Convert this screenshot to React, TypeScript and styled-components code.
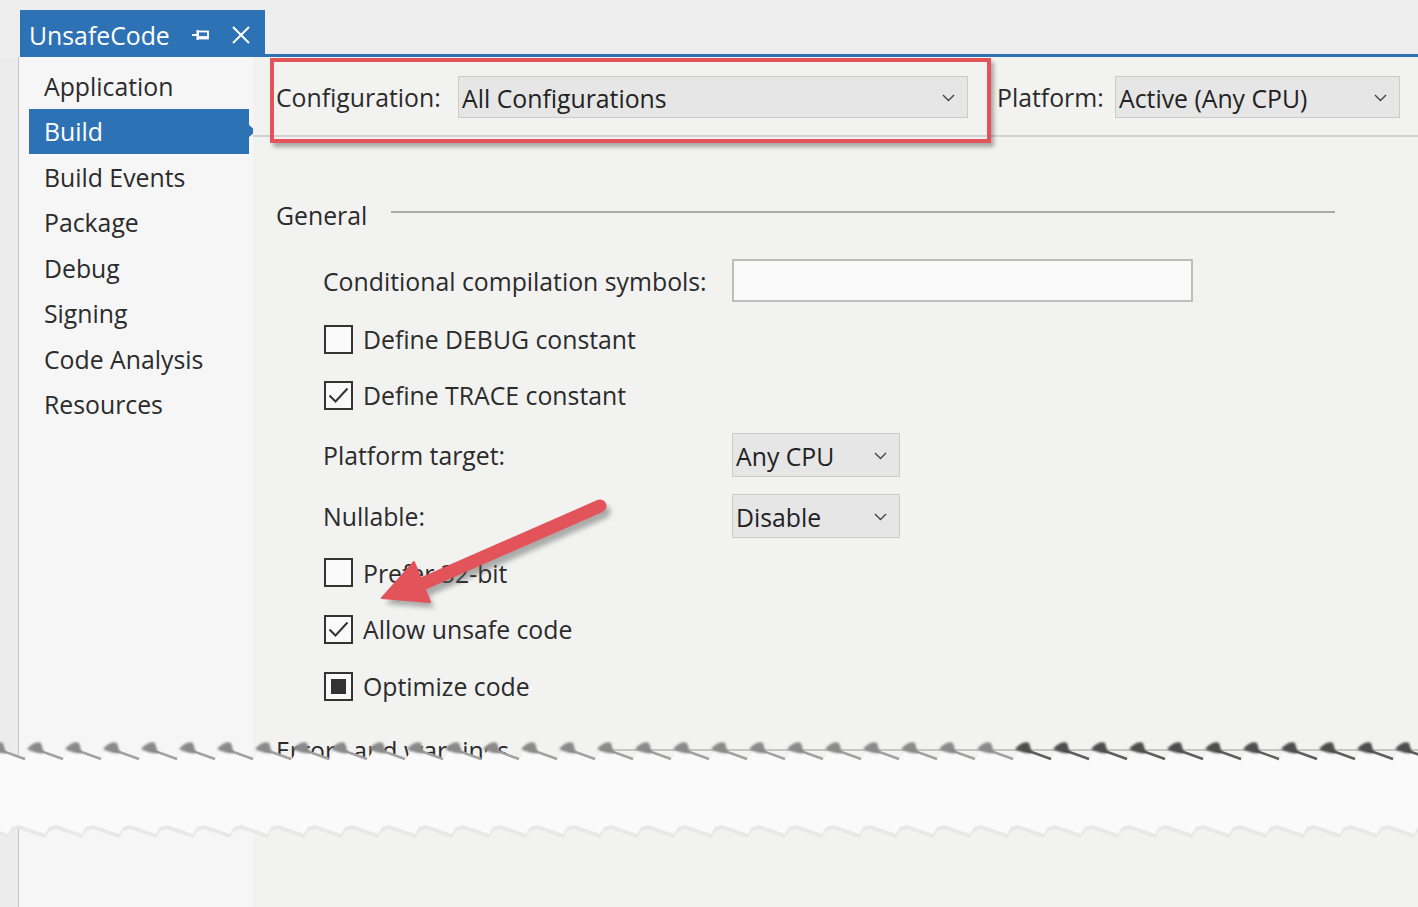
import React from "react";
import styled, { createGlobalStyle } from "styled-components";

const Global = createGlobalStyle`
  html, body { margin: 0; padding: 0; background: #eeeeee; }
  * { box-sizing: border-box; }
`;

const BLUE = "#2e72b6";
const RED = "#e2535a";
const FONT = `"Open Sans", "Noto Sans", "Liberation Sans", sans-serif`;

const Page = styled.div`
  position: relative;
  width: 1418px;
  height: 907px;
  overflow: hidden;
  display: flex;
  flex-direction: column;
  background: #eeeeee;
  font-family: ${FONT};
  font-size: 24.8px;
  color: #2b2b2b;
`;

const TabStrip = styled.div`
  height: 57px;
  margin-left: 20px;
  display: flex;
  align-items: flex-end;
  border-bottom: 3px solid ${BLUE};
`;

const Tab = styled.div`
  height: 47px;
  width: 245px;
  margin-bottom: -3px;
  background: ${BLUE};
  color: #ffffff;
  display: flex;
  align-items: center;
  padding-left: 9px;
  padding-top: 3px;
`;

const TabTitle = styled.span`
  flex: 1;
  line-height: 1;
`;

const TabIcon = styled.svg<{ $mr?: number }>`
  display: block;
  margin-right: ${(p) => p.$mr ?? 0}px;
`;

const Body = styled.div`
  flex: 1;
  display: flex;
  min-height: 0;
`;

const Gutter = styled.div`
  width: 19px;
  border-right: 1px solid #c6c6c6;
  background: #ececec;
`;

const Sidebar = styled.nav`
  width: 234px;
  background: #f6f6f6;
  padding-top: 6px;
  display: flex;
  flex-direction: column;
`;

const NavItem = styled.div<{ $active?: boolean }>`
  position: relative;
  height: 45.5px;
  width: 220px;
  margin-left: 10px;
  padding-left: 15px;
  display: flex;
  align-items: center;
  background: ${(p) => (p.$active ? BLUE : "transparent")};
  color: ${(p) => (p.$active ? "#ffffff" : "#2b2b2b")};
  ${(p) =>
    p.$active &&
    `&::after {
      content: "";
      position: absolute;
      right: -7px;
      top: 50%;
      margin-top: -6px;
      border-left: 7px solid ${BLUE};
      border-top: 6px solid transparent;
      border-bottom: 6px solid transparent;
    }`}
`;

const Main = styled.main`
  position: relative;
  flex: 1;
  background: #f2f2f1;
  display: flex;
  flex-direction: column;
`;

const HeaderBar = styled.div`
  position: relative;
  display: flex;
  align-items: center;
  padding: 19px 0 17px 23px;
  border-bottom: 2px solid #d2d2d2;
`;

const FieldLabel = styled.span<{ $w: number }>`
  width: ${(p) => p.$w}px;
  flex: none;
  white-space: nowrap;
`;

const Select = styled.div<{ $w: number; $h?: number; $mr?: number }>`
  width: ${(p) => p.$w}px;
  height: ${(p) => p.$h ?? 42}px;
  margin-right: ${(p) => p.$mr ?? 0}px;
  flex: none;
  display: flex;
  align-items: center;
  justify-content: space-between;
  padding: 2px 12px 0 3px;
  background: #e6e6e6;
  border: 1px solid #cbcbcb;
  color: #222;
  white-space: nowrap;
`;

const Highlight = styled.div`
  position: absolute;
  left: 17px;
  top: 1px;
  width: 721px;
  height: 85px;
  border: 4px solid ${RED};
  box-shadow: 3px 4px 4px rgba(0, 0, 0, 0.3);
  pointer-events: none;
`;

const Section = styled.div<{ $mt: number; $h?: number }>`
  display: flex;
  align-items: center;
  margin-top: ${(p) => p.$mt}px;
  height: ${(p) => p.$h ?? 32}px;
  padding-left: 23px;
  margin-right: 83px;
`;

const SectionRule = styled.div`
  flex: 1;
  height: 2px;
  margin-left: 24px;
  margin-top: -6px;
  background: #a9a9a9;
`;

const Row = styled.div<{ $h: number; $mt?: number }>`
  display: flex;
  align-items: center;
  height: ${(p) => p.$h}px;
  margin-top: ${(p) => p.$mt ?? 0}px;
  padding-left: 70px;
`;

const RowLabel = styled.span`
  width: 409px;
  flex: none;
  white-space: nowrap;
`;

const TextBox = styled.div`
  width: 461px;
  height: 43px;
  background: #fafafa;
  border: 2px solid #bdbdbd;
`;

const CheckLine = styled.label`
  display: flex;
  align-items: center;
  gap: 10px;
  white-space: nowrap;
`;

const Box = styled.span`
  width: 29px;
  height: 29px;
  margin-left: 1px;
  border: 2px solid #333;
  background: #fafafa;
  display: flex;
  align-items: center;
  justify-content: center;
`;

const Fill = styled.span`
  width: 15px;
  height: 15px;
  background: #333;
`;

const Overlay = styled.svg<{ $l: number; $t: number }>`
  position: absolute;
  left: ${(p) => p.$l}px;
  top: ${(p) => p.$t}px;
  pointer-events: none;
`;

const Chevron = () => (
  <svg width="13" height="8" viewBox="0 0 13 8">
    <path d="M1 1 L6.5 6.5 L12 1" fill="none" stroke="#444" strokeWidth="1.4" />
  </svg>
);

type CheckState = "off" | "on" | "mixed";

const Check = ({ state, children }: { state: CheckState; children: React.ReactNode }) => (
  <CheckLine>
    <Box>
      {state === "on" && (
        <svg width="25" height="25" viewBox="0 0 25 25">
          <path d="M3.5 12.5 L9.5 18.5 L21.5 5.5" fill="none" stroke="#333" strokeWidth="2" />
        </svg>
      )}
      {state === "mixed" && <Fill />}
    </Box>
    {children}
  </CheckLine>
);

const navItems = [
  "Application",
  "Build",
  "Build Events",
  "Package",
  "Debug",
  "Signing",
  "Code Analysis",
  "Resources",
];

function tearPaths() {
  const step = 38;
  let top = "M0 24";
  const blobs: string[] = [];
  const shadows: string[] = [];
  for (let x = -5; x < 1430; x += step) {
    top += ` L${x} 13 L${x + 30} 25`;
    blobs.push(
      `M${x - 6} 14 Q${x + 2} 5 ${x + 8} 8 L${x + 11} 18 Q${x + 2} 19 ${x - 6} 14 Z`
    );
    shadows.push(`M${x + 4} 20 L${x + 32} 30`);
  }
  top += " L1418 25";
  let bottom = " L1418 92";
  const bstep = 37;
  for (let x = 1418; x > -40; x -= bstep) {
    bottom += ` L${x - 4} 99 L${x - 30} 90 L${x - 37} 92`;
  }
  bottom += " L0 92 Z";
  return { body: top + bottom, blobs, shadows };
}

const Tear = () => {
  const { body, blobs, shadows } = tearPaths();
  return (
    <Overlay $l={0} $t={735} width="1418" height="110" viewBox="0 0 1418 110">
      <defs>
        <filter id="soft" x="-10%" y="-50%" width="120%" height="200%">
          <feGaussianBlur stdDeviation="0.8" />
        </filter>
      </defs>
      <path d={body} fill="#e8e8e8" transform="translate(0 4)" />
      {shadows.map((d, i) => (
        <path key={"s" + i} d={d} stroke="#c8c8c8" strokeWidth="4" fill="none" filter="url(#soft)" />
      ))}
      <path d={body} fill="#fafafa" />
      <path d="M600 15 L1418 15" stroke="#9a9a9a" strokeWidth="1" />
      {shadows.map((d, i) => (
        <path
          key={"e" + i}
          d={d}
          transform="translate(-2 -6)"
          stroke={i > 26 ? "#5e5e5e" : "#a2a2a2"}
          strokeWidth="2.5"
          fill="none"
        />
      ))}
      {blobs.map((d, i) => (
        <path key={"b" + i} d={d} fill={i > 26 ? "#4e4e4e" : "#8a8a8a"} filter="url(#soft)" />
      ))}
    </Overlay>
  );
};

const Arrow = () => (
  <Overlay $l={360} $t={480} width="270" height="140" viewBox="0 0 270 140">
    <defs>
      <filter id="sh" x="-20%" y="-20%" width="140%" height="140%">
        <feGaussianBlur stdDeviation="2.5" />
      </filter>
    </defs>
    <g transform="translate(4 6)" filter="url(#sh)" opacity="0.45">
      <path d="M240 26 L62 104" stroke="#555" strokeWidth="13" strokeLinecap="round" />
      <path d="M22 118 L54 82 L70 122 Z" fill="#555" />
    </g>
    <path d="M240 26 L62 104" stroke={RED} strokeWidth="13" strokeLinecap="round" />
    <path d="M22 118 L54 82 L70 122 Z" fill={RED} stroke={RED} strokeWidth="2" strokeLinejoin="round" />
  </Overlay>
);

export default function App() {
  return (
    <Page>
      <Global />
      <TabStrip>
        <Tab>
          <TabTitle>UnsafeCode</TabTitle>
          <TabIcon $mr={22} width="18" height="14" viewBox="0 0 18 14">
            <path d="M0 7 H5 M5.5 2 V12" stroke="#fff" strokeWidth="2" fill="none" />
            <rect x="6" y="3.5" width="10" height="7" stroke="#fff" strokeWidth="1.8" fill="none" />
            <path d="M6 9 H16" stroke="#fff" strokeWidth="1.8" />
          </TabIcon>
          <TabIcon $mr={15} width="18" height="18" viewBox="0 0 18 18">
            <path d="M1 1 L17 17 M17 1 L1 17" stroke="#fff" strokeWidth="2" />
          </TabIcon>
        </Tab>
      </TabStrip>
      <Body>
        <Gutter />
        <Sidebar>
          {navItems.map((n) => (
            <NavItem key={n} $active={n === "Build"}>
              {n}
            </NavItem>
          ))}
        </Sidebar>
        <Main>
          <HeaderBar>
            <FieldLabel $w={182}>Configuration:</FieldLabel>
            <Select $w={510} $mr={29}>
              <span>All Configurations</span>
              <Chevron />
            </Select>
            <FieldLabel $w={118}>Platform:</FieldLabel>
            <Select $w={285}>
              <span>Active (Any CPU)</span>
              <Chevron />
            </Select>
            <Highlight />
          </HeaderBar>

          <Section $mt={62}>
            <span>General</span>
            <SectionRule />
          </Section>

          <Row $h={43} $mt={28}>
            <RowLabel>Conditional compilation symbols:</RowLabel>
            <TextBox />
          </Row>
          <Row $h={56} $mt={9}>
            <Check state="off">Define DEBUG constant</Check>
          </Row>
          <Row $h={56}>
            <Check state="on">Define TRACE constant</Check>
          </Row>
          <Row $h={64}>
            <RowLabel>Platform target:</RowLabel>
            <Select $w={168} $h={44}>
              <span>Any CPU</span>
              <Chevron />
            </Select>
          </Row>
          <Row $h={58}>
            <RowLabel>Nullable:</RowLabel>
            <Select $w={168} $h={44}>
              <span>Disable</span>
              <Chevron />
            </Select>
          </Row>
          <Row $h={55}>
            <Check state="off">Prefer 32-bit</Check>
          </Row>
          <Row $h={58}>
            <Check state="on">Allow unsafe code</Check>
          </Row>
          <Row $h={56}>
            <Check state="mixed">Optimize code</Check>
          </Row>

          <Section $mt={20}>
            <span>Errors and warnings</span>
          </Section>
        </Main>
      </Body>
      <Arrow />
      <Tear />
    </Page>
  );
}
